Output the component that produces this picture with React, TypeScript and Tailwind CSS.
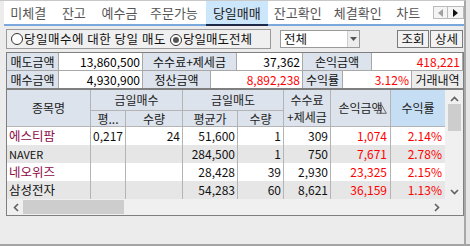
import React from 'react';

const FONT = '"Noto Sans CJK KR", "Noto Sans", sans-serif';

const tabs = [
  { label: '미체결', w: 'w-[49px]' },
  { label: '잔고', w: 'w-[43px]' },
  { label: '예수금', w: 'w-[49px]' },
  { label: '주문가능', w: 'w-[61px]' },
  { label: '당일매매', w: 'w-[62px]', active: true },
  { label: '잔고확인', w: 'w-[61px]' },
  { label: '체결확인', w: 'w-[60px]' },
  { label: '차트', w: 'w-[42px]' },
];

const rows = [
  { name: '에스티팜', hot: true, bAvg: '0,217', bQty: '24', sAvg: '51,600', sQty: '1', fee: '309', pl: '1,074', rate: '2.14%' },
  { name: 'NAVER', hot: false, bAvg: '', bQty: '', sAvg: '284,500', sQty: '1', fee: '750', pl: '7,671', rate: '2.78%' },
  { name: '네오위즈', hot: true, bAvg: '', bQty: '', sAvg: '28,428', sQty: '39', fee: '2,930', pl: '23,325', rate: '2.15%' },
  { name: '삼성전자', hot: false, bAvg: '', bQty: '', sAvg: '54,283', sQty: '60', fee: '8,621', pl: '36,159', rate: '1.13%' },
];

const cols = 'grid grid-cols-[84px_35px_57px_55px_46px_47px_60px_54px]';

const Radio = ({ on }: { on?: boolean }) => (
  <span className="inline-flex w-[12px] h-[12px] rounded-full border border-[#333] bg-white items-center justify-center mr-[1px]">
    {on && <span className="w-[6px] h-[6px] rounded-full bg-[#555]" />}
  </span>
);

const Label = ({ children, w }: { children: React.ReactNode; w: string }) => (
  <div className={`${w} h-full bg-[#dce3ec] border-r border-[#a8a8a8] flex items-center justify-center`}>{children}</div>
);

const Value = ({ children, w, red }: { children: React.ReactNode; w: string; red?: boolean }) => (
  <div className={`${w} h-full bg-white border-r border-[#a8a8a8] flex items-center justify-end pr-[2px] ${red ? 'text-[#ff0000]' : 'text-black'}`}>{children}</div>
);

export default function App() {
  return (
    <div className="w-[470px] h-[246px] bg-[#e6e6e6] overflow-hidden text-[12px] leading-[14px] text-[#111]" style={{ fontFamily: FONT }}>
      <div className="w-[466px] h-[244px] border-t border-[#c8c8c8] border-r-2 border-r-[#a8a8a8] bg-[#ececec]">
        {/* tabs */}
        <div className="ml-[4px] w-[460px] h-[25px] bg-white border-b-2 border-[#7aa8dc] flex items-stretch">
          {tabs.map(t => (
            <div
              key={t.label}
              className={`${t.w} flex items-center justify-center text-[13px] ${t.active ? 'bg-[#cce6fb] text-[#222] border-b-2 border-[#1e2a48] -mb-[2px] ml-[2px]' : 'text-[#555]'}`}
            >
              {t.label}
            </div>
          ))}
          <div className="flex items-center ml-[4px]">
            <div className="w-[15px] h-[13px] border border-[#bbb] bg-[#f4f4f4] flex items-center justify-center">
              <svg width="5" height="8" viewBox="0 0 5 8"><path d="M5 0L0 4l5 4z" fill="#a0a0a0" /></svg>
            </div>
            <div className="w-[16px] h-[13px] border border-l-0 border-[#bbb] bg-[#f4f4f4] flex items-center justify-center">
              <svg width="5" height="8" viewBox="0 0 5 8"><path d="M0 0l5 4-5 4z" fill="#111" /></svg>
            </div>
          </div>
        </div>

        {/* filter row */}
        <div className="h-[25px] flex items-center pl-[6px]">
          <div className="w-[265px] h-[20px] border border-[#9a9a9a] bg-[#f0f0f0] flex items-center pl-[4px] text-[12.5px]">
            <Radio />
            <span className="tracking-[0.5px]">당일매수에 대한 당일 매도</span>
            <span className="ml-[4px]"><Radio on /></span>
            <span>당일매도전체</span>
          </div>
          <div className="ml-[9px] w-[80px] h-[18px] border border-[#9a9a9a] bg-white flex items-center text-[12.5px]">
            <span className="flex-1 pl-[3px]">전체</span>
            <div className="w-[12px] h-full bg-[#ededed] border-l border-[#cfcfcf] flex items-center justify-center">
              <svg width="7" height="4" viewBox="0 0 7 4"><path d="M0 0h7L3.5 4z" fill="#555" /></svg>
            </div>
          </div>
          <div className="ml-[37px] w-[32px] h-[18px] border border-[#7a7a7a] bg-[#f2f2f2] flex items-center justify-center text-[12.5px]">조회</div>
          <div className="ml-[1px] w-[33px] h-[18px] border border-[#7a7a7a] bg-[#f2f2f2] flex items-center justify-center text-[12.5px]">상세</div>
        </div>

        {/* summary */}
        <div className="ml-[6px] mt-[1px] w-[458px] border border-[#7f7f7f] bg-[#ececec]">
          <div className="h-[18px] flex border-b border-[#a8a8a8]">
            <Label w="w-[52px]">매도금액</Label>
            <Value w="w-[84px]">13,860,500</Value>
            <Label w="w-[94px]">수수료+제세금</Label>
            <Value w="w-[66px]">37,362</Value>
            <Label w="w-[69px]">손익금액</Label>
            <Value w="w-[91px]" red>418,221</Value>
          </div>
          <div className="h-[17px] flex">
            <Label w="w-[52px]">매수금액</Label>
            <Value w="w-[84px]">4,930,900</Value>
            <Label w="w-[68px]">정산금액</Label>
            <Value w="w-[92px]" red>8,892,238</Value>
            <Label w="w-[40px]">수익률</Label>
            <Value w="w-[69px]" red>3.12%</Value>
            <div className="flex-1 h-full bg-[#ececec] flex items-center justify-center">거래내역</div>
          </div>
        </div>

        {/* grid */}
        <div className="ml-[6px] w-[458px] h-[127px] border border-[#7f7f7f] bg-[#f0f0f0] flex flex-col">
          <div className="flex">
            <div className="flex flex-col">
              <div className={`${cols} grid-rows-[21px_16px] bg-[#dce3ec] text-[#222]`}>
                <div className="row-span-2 border-r border-b border-[#b4b4b4] flex items-center justify-center">종목명</div>
                <div className="col-span-2 border-r border-b border-[#b4b4b4] flex items-center justify-center">금일매수</div>
                <div className="col-span-2 border-r border-b border-[#b4b4b4] flex items-center justify-center">금일매도</div>
                <div className="row-span-2 border-r border-b border-[#b4b4b4] flex flex-col items-center justify-center leading-[17px]">
                  <span>수수료</span>
                  <span>+제세금</span>
                </div>
                <div className="row-span-2 relative border-r border-b border-[#b4b4b4] flex items-center justify-center">
                  손익금액
                  <svg className="absolute right-[3px] top-[14px]" width="11" height="10" viewBox="0 0 11 10">
                    <path d="M5.5 0.8L10.3 9.3H0.7z" fill="none" stroke="#666" strokeWidth="1" />
                    <path d="M5.5 3.5v3" stroke="#666" strokeWidth="1" />
                  </svg>
                </div>
                <div className="row-span-2 bg-[#c6def3] border-b border-[#b4b4b4] flex items-center justify-center">수익률</div>
                <div className="border-r border-b border-[#b4b4b4] flex items-center justify-center">평...</div>
                <div className="border-r border-b border-[#b4b4b4] flex items-center justify-center">수량</div>
                <div className="border-r border-b border-[#b4b4b4] flex items-center justify-center">평균가</div>
                <div className="border-r border-b border-[#b4b4b4] flex items-center justify-center">수량</div>
              </div>
              {rows.map((r, i) => (
                <div key={r.name} className={`${cols} h-[18px] ${i % 2 ? 'bg-[#e6e6e6]' : 'bg-white'}`}>
                  <div className={`border-r border-[#b4b4b4] flex items-center pl-[2px] ${r.hot ? 'text-[#8c0a46]' : 'text-[#111]'} ${r.name === 'NAVER' ? 'text-[11px]' : 'text-[12.5px]'}`}>{r.name}</div>
                  <div className="border-r border-[#b4b4b4] flex items-center justify-end pr-[2px]">{r.bAvg}</div>
                  <div className="border-r border-[#b4b4b4] flex items-center justify-end pr-[2px]">{r.bQty}</div>
                  <div className="border-r border-[#b4b4b4] flex items-center justify-end pr-[2px]">{r.sAvg}</div>
                  <div className="border-r border-[#b4b4b4] flex items-center justify-end pr-[2px]">{r.sQty}</div>
                  <div className="border-r border-[#b4b4b4] flex items-center justify-end pr-[2px]">{r.fee}</div>
                  <div className="border-r border-[#b4b4b4] flex items-center justify-end pr-[3px] text-[#ff0000]">{r.pl}</div>
                  <div className="flex items-center justify-end pr-[3px] text-[#ff0000]">{r.rate}</div>
                </div>
              ))}
            </div>
            {/* vertical scrollbar */}
            <div className="w-[18px] flex flex-col items-center bg-[#f0f0f0]">
              <svg className="mt-[6px]" width="9" height="6" viewBox="0 0 9 6"><path d="M1 5l3.5-3.5L8 5" fill="none" stroke="#606060" strokeWidth="1.6" /></svg>
              <div className="mt-[2px] w-[13px] h-[27px] bg-[#cdcdcd]" />
              <div className="flex-1" />
              <svg className="mb-[4px]" width="9" height="6" viewBox="0 0 9 6"><path d="M1 1l3.5 3.5L8 1" fill="none" stroke="#606060" strokeWidth="1.6" /></svg>
            </div>
          </div>
          {/* horizontal scrollbar */}
          <div className="h-[17px] flex items-center bg-[#f0f0f0]">
            <svg className="ml-[6px]" width="6" height="9" viewBox="0 0 6 9"><path d="M5 1L1.5 4.5 5 8" fill="none" stroke="#606060" strokeWidth="1.6" /></svg>
            <div className="ml-[4px] w-[101px] h-[14px] bg-[#cdcdcd]" />
            <div className="flex-1" />
            <svg className="mr-[23px]" width="6" height="9" viewBox="0 0 6 9"><path d="M1 1l3.5 3.5L1 8" fill="none" stroke="#606060" strokeWidth="1.6" /></svg>
          </div>
        </div>
      </div>
      <div className="h-[2px] bg-[#a4a4a4]" />
    </div>
  );
}
